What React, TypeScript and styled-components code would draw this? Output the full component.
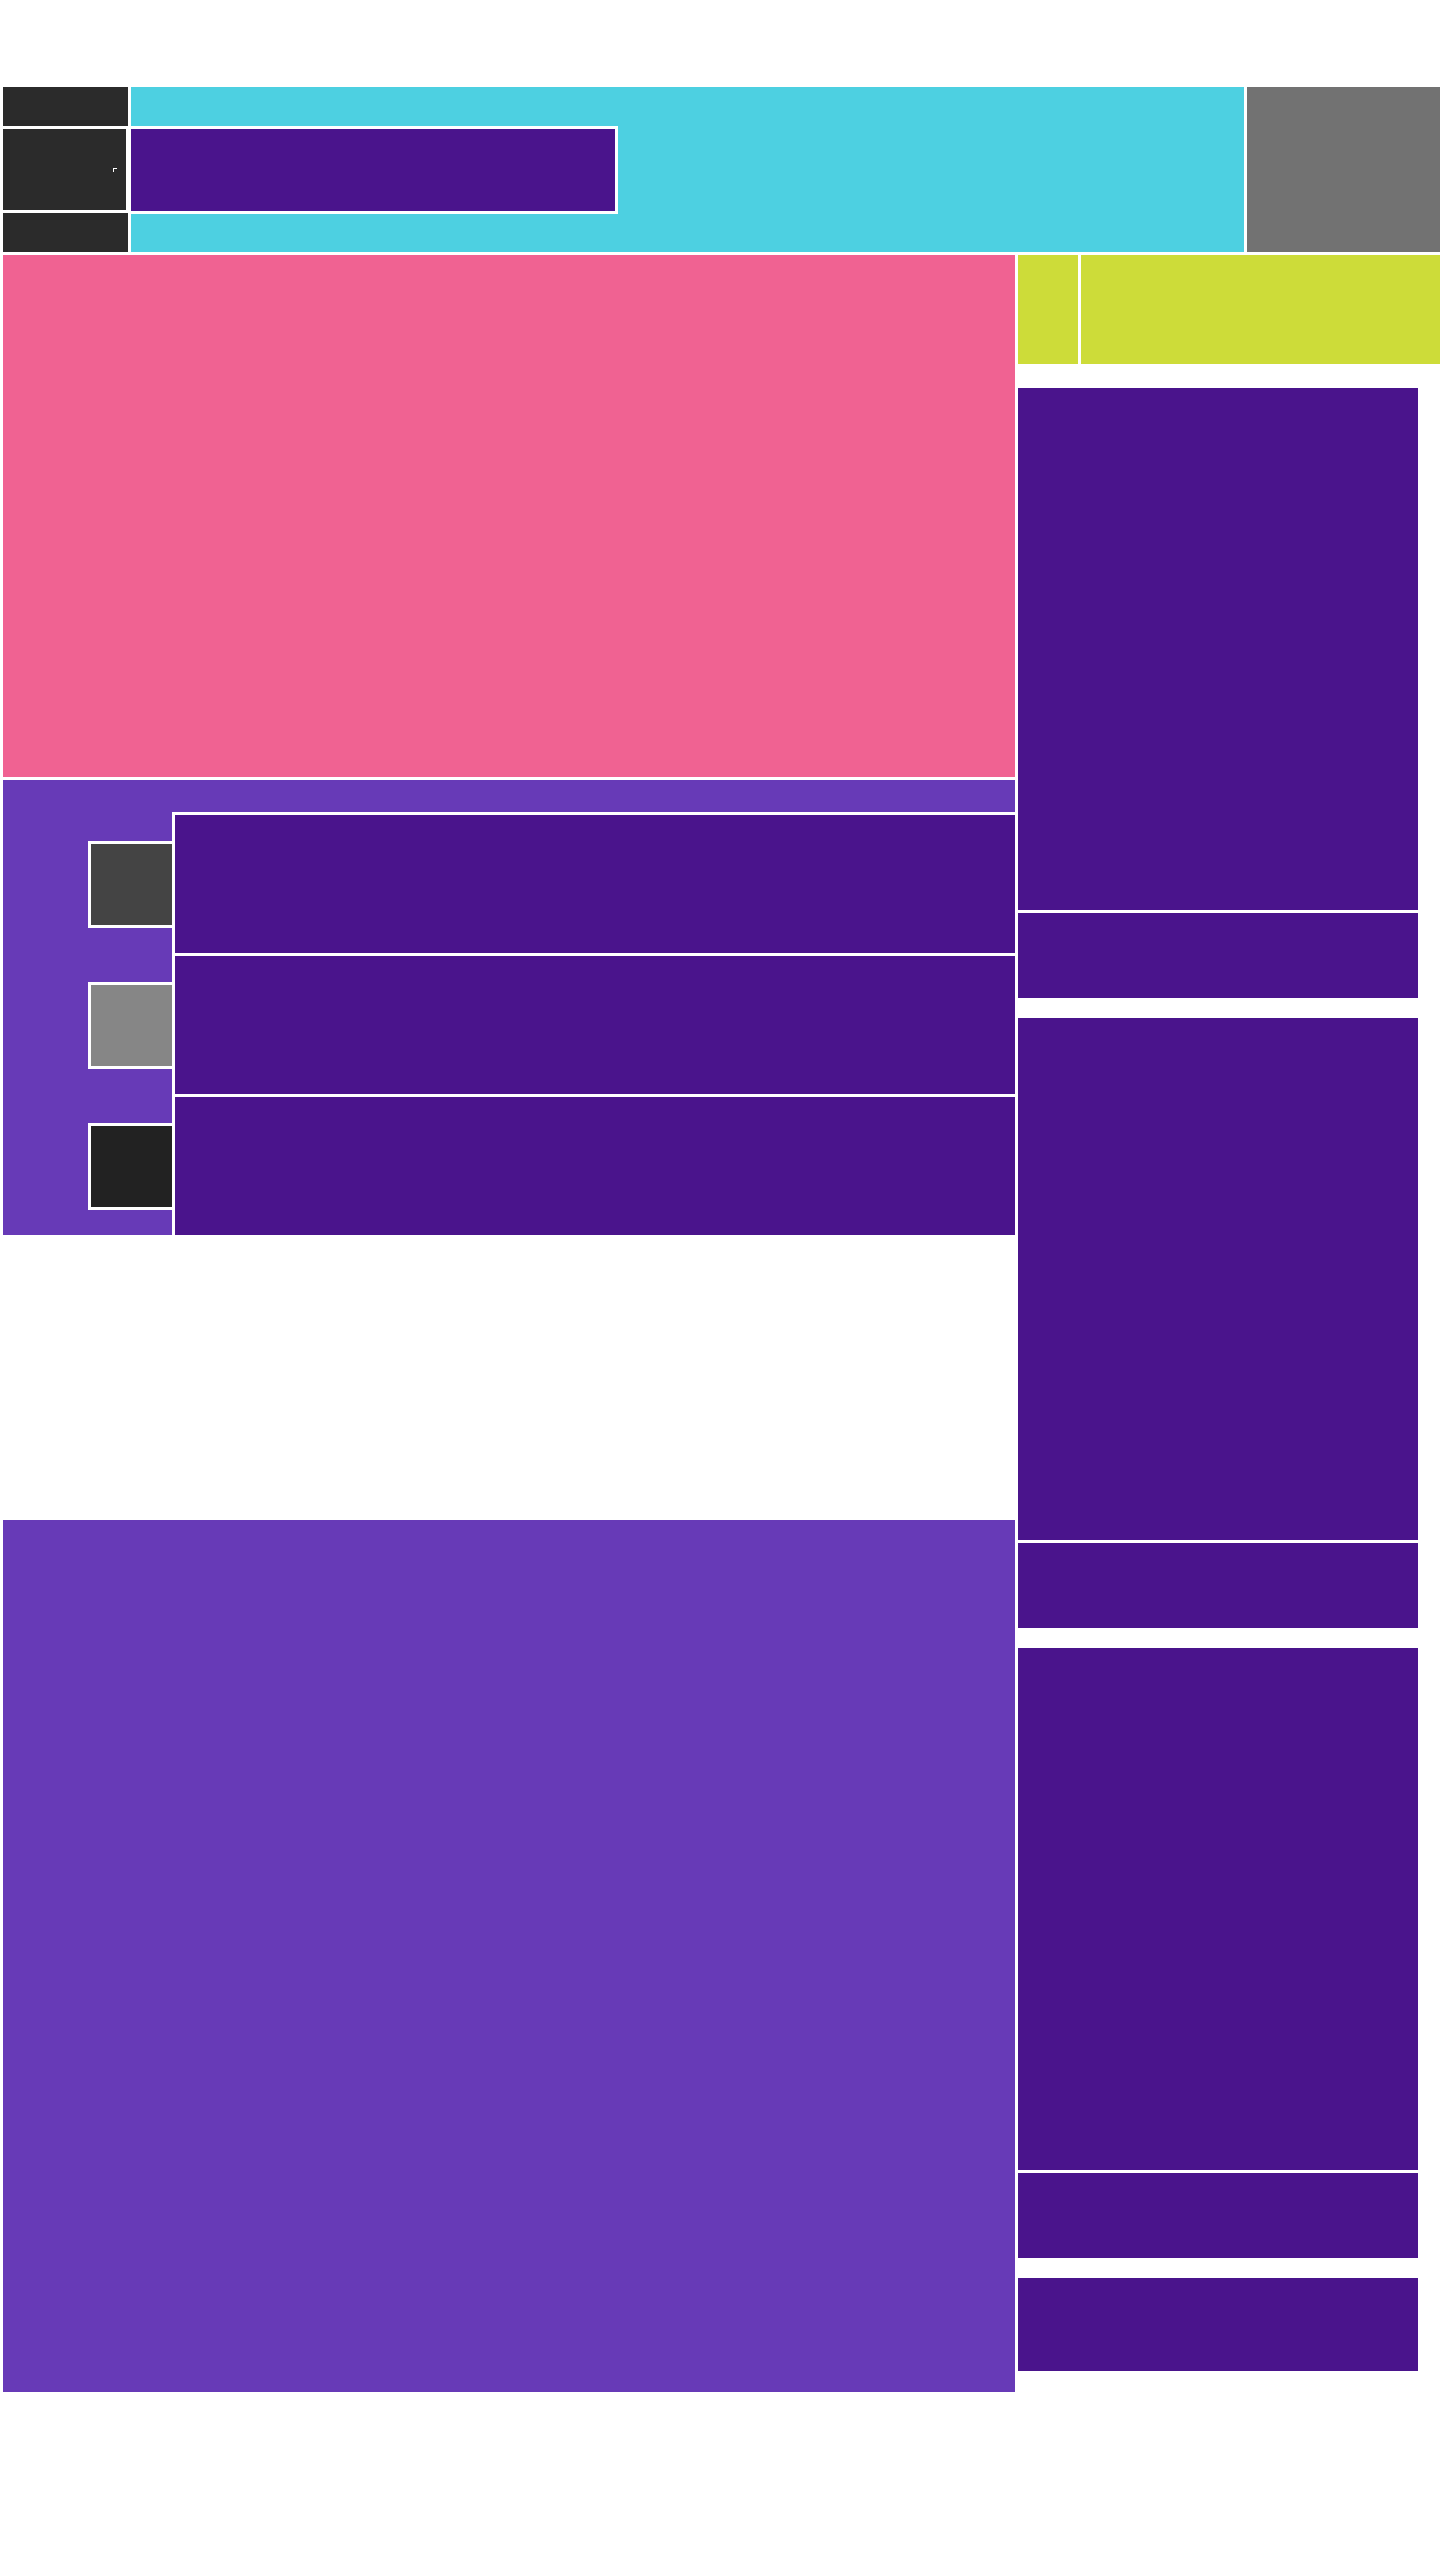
import React from "react";
import styled, { createGlobalStyle } from "styled-components";

const Global = createGlobalStyle`
  html, body { margin: 0; padding: 0; background: #ffffff; }
  body { font-family: "Liberation Sans", Arial, sans-serif; }
  * { box-sizing: border-box; }
`;

const Page = styled.div`
  width: 1440px;
  min-height: 2560px;
  padding: 87px 0 0 3px;
  display: flex;
  flex-direction: column;
  gap: 3px;
`;

const Header = styled.header`
  display: flex;
  gap: 3px;
  height: 165px;
`;

const Brand = styled.div`
  width: 125px;
  display: flex;
  flex-direction: column;
  gap: 3px;
`;

const BrandBar = styled.div<{ $h: number; $w?: number }>`
  height: ${(p) => p.$h}px;
  width: ${(p) => (p.$w ? `${p.$w}px` : "100%")};
  background: #2b2b2b;
  display: flex;
  align-items: center;
  justify-content: flex-end;
  padding-right: 9px;
`;

const Corner = styled.span`
  width: 4px;
  height: 4px;
  border-top: 1px solid #ffffff;
  border-left: 1px solid #ffffff;
`;

const NavBar = styled.nav`
  width: 1113px;
  background: #4dd0e1;
  display: flex;
  align-items: center;
`;

const Search = styled.div`
  width: 487px;
  height: 88px;
  background: #4a148c;
  border-top: 3px solid #ffffff;
  border-right: 3px solid #ffffff;
  border-bottom: 3px solid #ffffff;
`;

const Account = styled.div`
  width: 193px;
  background: #727272;
`;

const Body = styled.div`
  display: flex;
  gap: 3px;
  align-items: flex-start;
`;

const Main = styled.main`
  width: 1012px;
  display: flex;
  flex-direction: column;
`;

const Hero = styled.section`
  height: 522px;
  background: #f06292;
`;

const Featured = styled.section`
  margin-top: 3px;
  background: #673ab7;
  padding-top: 32px;
  display: flex;
  flex-direction: column;
`;

const Row = styled.div`
  display: flex;
  align-items: center;
`;

const ThumbCol = styled.div`
  width: 169px;
  display: flex;
  justify-content: flex-end;
  padding-top: 3px;
`;

const Thumb = styled.div<{ $c: string }>`
  width: 84px;
  height: 87px;
  background: ${(p) => p.$c};
  border-top: 3px solid #ffffff;
  border-left: 3px solid #ffffff;
  border-bottom: 3px solid #ffffff;
`;

const Item = styled.div`
  flex: 1;
  height: 141px;
  background: #4a148c;
  border-top: 3px solid #ffffff;
  border-left: 3px solid #ffffff;
`;

const Content = styled.section`
  margin-top: 285px;
  height: 872px;
  background: #673ab7;
`;

const Aside = styled.aside`
  width: 422px;
  display: flex;
  flex-direction: column;
`;

const Promo = styled.div`
  height: 109px;
  display: flex;
  gap: 3px;
`;

const PromoPart = styled.div<{ $w?: number }>`
  background: #cddc39;
  ${(p) => (p.$w ? `width: ${p.$w}px;` : "flex: 1;")}
`;

const Cards = styled.div`
  margin-top: 24px;
  width: 400px;
  display: flex;
  flex-direction: column;
  gap: 20px;
`;

const Card = styled.div`
  display: flex;
  flex-direction: column;
  gap: 3px;
`;

const CardBlock = styled.div<{ $h: number }>`
  height: ${(p) => p.$h}px;
  background: #4a148c;
`;

const thumbs = ["#444444", "#868686", "#222222"];

export default function App() {
  return (
    <>
      <Global />
      <Page>
        <Header>
          <Brand>
            <BrandBar $h={39} />
            <BrandBar $h={81} $w={123}>
              <Corner />
            </BrandBar>
            <BrandBar $h={39} />
          </Brand>
          <NavBar>
            <Search />
          </NavBar>
          <Account />
        </Header>
        <Body>
          <Main>
            <Hero />
            <Featured>
              {thumbs.map((c) => (
                <Row key={c}>
                  <ThumbCol>
                    <Thumb $c={c} />
                  </ThumbCol>
                  <Item />
                </Row>
              ))}
            </Featured>
            <Content />
          </Main>
          <Aside>
            <Promo>
              <PromoPart $w={60} />
              <PromoPart />
            </Promo>
            <Cards>
              {[0, 1, 2].map((i) => (
                <Card key={i}>
                  <CardBlock $h={522} />
                  <CardBlock $h={85} />
                </Card>
              ))}
              <CardBlock $h={93} />
            </Cards>
          </Aside>
        </Body>
      </Page>
    </>
  );
}
